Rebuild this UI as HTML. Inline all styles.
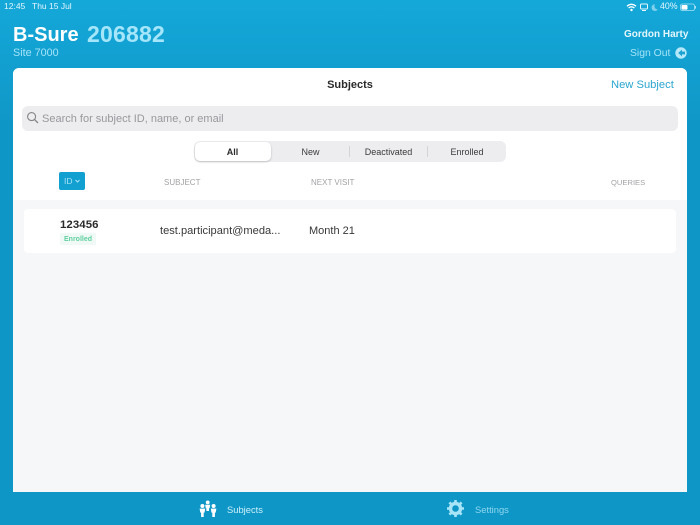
<!DOCTYPE html>
<html><head><meta charset="utf-8">
<style>
*{box-sizing:border-box;margin:0;padding:0}
html,body{width:700px;height:525px;overflow:hidden}
body{position:relative;font-family:"Liberation Sans",sans-serif;background:#0e97c6}
.t{position:absolute;white-space:nowrap;line-height:1}
#hdr{position:absolute;left:0;top:0;width:700px;height:120px;background:linear-gradient(#14a8d9,#1098c8)}
#card{position:absolute;left:13px;top:68px;width:674px;height:424px;background:#f6f7f9;border-radius:6px 6px 0 0;overflow:hidden}
#top{position:absolute;left:0;top:0;width:674px;height:132px;background:#fff}
#search{position:absolute;left:9px;top:38px;width:656px;height:25px;background:#ededef;border-radius:6px}
#seg{position:absolute;left:181px;top:73px;width:312px;height:21px;background:#ededf0;border-radius:6px}
#sel{position:absolute;left:1px;top:1px;width:76px;height:19px;background:#fff;border-radius:5px;box-shadow:0 1px 2px rgba(0,0,0,.2)}
.sep{position:absolute;top:5px;width:1px;height:11px;background:#d4d4d8}
#idb{position:absolute;left:46px;top:104px;width:26px;height:18px;background:#11a0d0;border-radius:2px}
#row{position:absolute;left:11px;top:141px;width:652px;height:44px;background:#fff;border-radius:4px}
#badge{position:absolute;left:36px;top:24px;width:36px;height:12px;background:#f0f9f5;border-radius:2px}
</style></head><body>
<div id="hdr"></div>
<div class="t" style="left:4px;top:2px;font-size:8.5px;color:#e6f6fc">12:45</div>
<div class="t" style="left:32px;top:2px;font-size:8.5px;color:#e6f6fc">Thu 15 Jul</div>
<svg style="position:absolute;left:626px;top:3px" width="74" height="9" viewBox="0 0 74 9">
<path d="M1 3.2Q5.5-.6 10 3.2M2.6 5Q5.5 2.6 8.4 5" fill="none" stroke="#fff" stroke-width="1.3"/><circle cx="5.5" cy="7" r="1.2" fill="#fff"/>
<rect x="14.5" y="1" width="7" height="5" rx="1" fill="none" stroke="#e6f6fc" stroke-width="1"/><path d="M16 7.5h4" stroke="#e6f6fc"/>
<path d="M29 1.2a3.4 3.4 0 1 0 2.8 5.2a3.4 3.4 0 0 1-2.8-5.2z" fill="#7fd0ec"/>
<rect x="54.5" y="1" width="14" height="6.6" rx="1.8" fill="none" stroke="#a9e1f3" stroke-width=".8"/><rect x="55.5" y="2" width="6" height="4.6" rx="1" fill="#fff"/><rect x="69" y="3" width="1" height="2.6" fill="#a9e1f3"/>
</svg>
<div class="t" style="left:660px;top:2px;font-size:8.8px;color:#e6f6fc">40%</div>
<div class="t" style="left:13px;top:25px;font-size:20px;font-weight:bold;color:#fff">B-Sure</div>
<div class="t" style="left:87px;top:23px;font-size:23px;font-weight:bold;color:#a5e6fb;letter-spacing:.2px">206882</div>
<div class="t" style="left:13px;top:48px;font-size:10.8px;color:#a5e3f7">Site 7000</div>
<div class="t" style="left:624px;top:30px;font-size:10px;font-weight:bold;color:#e4f6fc">Gordon Harty</div>
<div class="t" style="left:630px;top:49px;font-size:10.4px;color:#a5e3f7">Sign Out</div>
<svg style="position:absolute;left:675px;top:47px" width="12" height="12" viewBox="0 0 12 12"><circle cx="6" cy="6" r="5.7" fill="#b5e8f9"/><path d="M7 2.6L3.2 6L7 9.4V7.4H10V4.6H7z" fill="#1aa3d2"/></svg>
<div id="card">
<div id="top"></div>
<div class="t" style="left:0;width:674px;text-align:center;top:12px;font-size:11px;font-weight:bold;color:#2a2a2c">Subjects</div>
<div class="t" style="left:598px;top:12px;font-size:11.2px;color:#2ba6cf">New Subject</div>
<div id="search">
<svg style="position:absolute;left:4px;top:5px" width="13" height="13" viewBox="0 0 13 13"><circle cx="5.6" cy="5.6" r="4" fill="none" stroke="#85858a" stroke-width="1.1"/><path d="M8.6 8.6L12 12" stroke="#85858a" stroke-width="1.3"/></svg>
<div class="t" style="left:20px;top:8px;font-size:11px;color:#98989d">Search for subject ID, name, or email</div>
</div>
<div id="seg"><div id="sel"></div>
<div class="sep" style="left:155px"></div><div class="sep" style="left:233px"></div>
<div class="t" style="left:0;width:77px;text-align:center;top:7px;font-size:9px;font-weight:bold;color:#2a2a2c">All</div>
<div class="t" style="left:78px;width:77px;text-align:center;top:7px;font-size:9px;color:#3a3a3c">New</div>
<div class="t" style="left:156px;width:77px;text-align:center;top:7px;font-size:9px;color:#3a3a3c">Deactivated</div>
<div class="t" style="left:234px;width:78px;text-align:center;top:7px;font-size:9px;color:#3a3a3c">Enrolled</div>
</div>
<div id="idb"><div class="t" style="left:5px;top:5px;font-size:8.5px;color:#a8e3f6">ID</div>
<svg style="position:absolute;left:16px;top:7px" width="5" height="4" viewBox="0 0 5 4"><path d="M.5 1L2.5 3L4.5 1" fill="none" stroke="#a8e3f6"/></svg></div>
<div class="t" style="left:151px;top:111px;font-size:8px;color:#a2a2a6">SUBJECT</div>
<div class="t" style="left:298px;top:111px;font-size:8px;color:#a2a2a6">NEXT VISIT</div>
<div class="t" style="left:598px;top:111px;font-size:7.6px;color:#a2a2a6">QUERIES</div>
<div id="row">
<div class="t" style="left:36px;top:11px;font-size:11.4px;font-weight:bold;color:#2a2a2c;letter-spacing:.1px">123456</div>
<div id="badge"></div>
<div class="t" style="left:40px;top:27px;font-size:7px;font-weight:bold;color:#5fd0a0">Enrolled</div>
<div class="t" style="left:136px;top:17px;font-size:11.1px;color:#38383a">test.participant@meda...</div>
<div class="t" style="left:285px;top:17px;font-size:11px;color:#38383a">Month 21</div>
</div>
</div>
<svg style="position:absolute;left:199px;top:500px" width="18" height="18" viewBox="0 0 18 18" fill="#fff">
<circle cx="8.7" cy="2.4" r="1.9"/><path d="M6.2 4.8h5l-.6 3.4h-.6V11H7.4V8.2h-.6z"/>
<circle cx="3.4" cy="6" r="2"/><path d="M.6 8.6h5.6l-.7 4h-.8V17H2.1V12.6h-.8z"/>
<circle cx="14.6" cy="6" r="2"/><path d="M11.8 8.6h5.6l-.7 4h-.8V17h-2.6V12.6h-.8z"/>
</svg>
<div class="t" style="left:227px;top:505px;font-size:9.4px;color:#cdeffa">Subjects</div>
<svg style="position:absolute;left:447px;top:500px" width="17" height="17" viewBox="0 0 17 17"><circle cx="8.5" cy="8.5" r="5" fill="none" stroke="#a8e4f8" stroke-width="3.4"/><g stroke="#a8e4f8" stroke-width="2.6"><path d="M8.5 0v3M8.5 14v3M0 8.5h3M14 8.5h3M2.4 2.4l2.2 2.2M12.4 12.4l2.2 2.2M14.6 2.4l-2.2 2.2M4.6 12.4l-2.2 2.2"/></g></svg>
<div class="t" style="left:475px;top:505px;font-size:9.4px;color:#8fd6ef">Settings</div>
</body></html>
